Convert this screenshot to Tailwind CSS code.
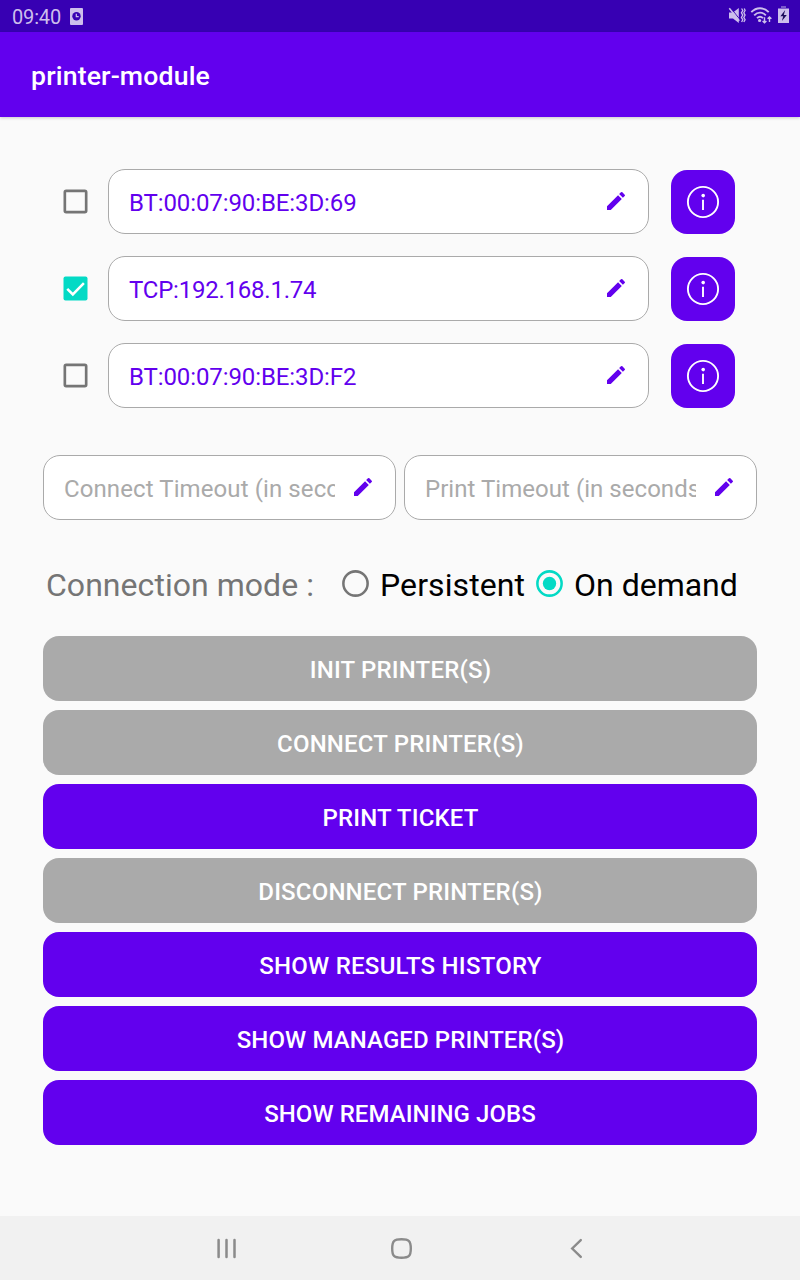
<!DOCTYPE html>
<html lang="en">
<head>
<meta charset="utf-8">
<title>printer-module</title>
<script src="https://cdn.jsdelivr.net/npm/@tailwindcss/browser@4"></script>
</head>
<body class="bg-[#fafafa] font-[Roboto,sans-serif]">
<svg class="hidden">
  <symbol id="edit" viewBox="0 0 24 24"><path fill="#6200ee" d="M3 17.25V21h3.75L17.81 9.94l-3.75-3.75L3 17.25zM20.71 7.04a1 1 0 0 0 0-1.41l-2.34-2.34a1 1 0 0 0-1.41 0l-1.83 1.83 3.75 3.75 1.83-1.83z"/></symbol>
  <symbol id="info" viewBox="0 0 34 34"><circle cx="17" cy="17" r="15.1" fill="none" stroke="#fff" stroke-width="1.9"/><circle cx="17.2" cy="10.6" r="1.8" fill="#fff"/><path d="M17 14.800v10.200" stroke="#fff" stroke-width="1.9"/></symbol>
  <symbol id="box" viewBox="-0.375 -0.375 24 24"><path fill="#757575" d="M19 5v14H5V5h14m0-2H5a2 2 0 0 0-2 2v14a2 2 0 0 0 2 2h14a2 2 0 0 0 2-2V5a2 2 0 0 0-2-2z"/></symbol>
</svg>
<div class="flex h-[1280px] w-[800px] flex-col overflow-hidden">
  <header class="flex h-8 shrink-0 items-center bg-[#3700b3] pl-3 text-[20px] text-[#cdbfec]">
    <span class="mt-[2px] leading-6 tracking-[-0.15px]">09:40</span>
    <svg class="ml-[9px] h-[17px] w-[13px]" viewBox="0 0 13 17"><rect width="13" height="17" rx="1" fill="#cdbfec"/><circle cx="6.5" cy="8.3" r="4.2" fill="#3700b3"/><path d="M6.3 5.8v2.8h2.4" fill="none" stroke="#cdbfec" stroke-width="1.2"/></svg>
    <div class="ml-auto flex h-full items-center pr-[10px]">
      <svg class="h-8 w-[62px]" viewBox="728 0 62 32" fill="none" stroke="#cdbfec">
        <path d="M729 12.500h4l5.800-4.500v15l-5.800-4.500h-4z" fill="#cdbfec" stroke="none"/>
        <path d="M730.300 7.500l10 12.500" stroke="#3700b3" stroke-width="1"/>
        <path d="M729.300 8.300l10 12.500" stroke-width="1.500"/>
        <path d="M741.600 8.500l1.200 2-1.400 2.300 1.400 2.300-1.400 2.300 1.400 2.300-1.200 2.300M744.300 8.500l.8 2-1.300 2.300 1.300 2.300-1.300 2.300 1.300 2.300-1.300 2.300" stroke-width="1.300"/>
        <path d="M751.300 12.200c5-5.300 12.400-5.300 17.400 0M754.200 15.300c3.400-3.600 8.200-3.600 11.600 0M757 18.200c1.900-1.900 4.100-1.900 6 0" stroke-width="1.900"/>
        <circle cx="759.600" cy="20.500" r="1.600" fill="#cdbfec" stroke="none"/>
        <path d="M764.500 17.300v5.500M762.600 20.900l1.900 1.900 1.900-1.900M769.500 22v-5M767.600 18.800l1.900-1.900 1.900 1.900" stroke-width="1.400"/>
        <path d="M778 8.500h11v14.500h-11z" fill="#cdbfec" stroke="none"/>
        <path d="M781 6h5v2.500h-5z" fill="#7b58cb" stroke="none"/>
        <path d="M785.200 10l-4.800 6.200h2.800l-1.300 4.800 4.900-6h-3z" fill="#1c0b5c" stroke="none"/>
      </svg>
    </div>
  </header>
  <div class="z-10 flex h-[85px] shrink-0 items-center bg-[#6200ee] pl-[31px] shadow-[0_1px_3px_rgba(0,0,0,0.2)]">
    <h1 class="mt-[3px] text-[26.67px] font-medium leading-8 tracking-[0.15px] text-white">printer-module</h1>
  </div>

  <main class="flex grow flex-col px-[43px] pt-[52px]">
    <section class="flex flex-col gap-[22px]">
      <div class="flex h-[65px] items-center">
        <svg class="mb-px ml-[16px] h-8 w-8"><use href="#box"/></svg>
        <div class="ml-[17px] flex h-[65px] w-[541px] items-center justify-between rounded-[17px] border border-[#aaa] bg-white pl-5 pr-5 text-[24px] text-[#6200ee]"><span class="mt-[2px] tracking-[-0.1px]">BT:00:07:90:BE:3D:69</span><svg class="mb-px h-6 w-6"><use href="#edit"/></svg></div>
        <button class="ml-[22px] mt-px flex h-16 w-16 items-center justify-center rounded-[16px] bg-[#6200ee]"><svg class="h-[34px] w-[34px]"><use href="#info"/></svg></button>
      </div>
      <div class="flex h-[65px] items-center">
        <svg class="mb-px ml-[16px] h-8 w-8" viewBox="-0.375 -0.375 24 24"><rect x="3" y="3" width="18" height="18" rx="1.5" fill="#03dac5"/><path d="M5.800 12.200l4.200 4.300 8.300-8.600" fill="none" stroke="#fff" stroke-width="1.900"/></svg>
        <div class="ml-[17px] flex h-[65px] w-[541px] items-center justify-between rounded-[17px] border border-[#aaa] bg-white pl-5 pr-5 text-[24px] text-[#6200ee]"><span class="mt-[2px] tracking-[-0.23px]">TCP:192.168.1.74</span><svg class="mb-px h-6 w-6"><use href="#edit"/></svg></div>
        <button class="ml-[22px] mt-px flex h-16 w-16 items-center justify-center rounded-[16px] bg-[#6200ee]"><svg class="h-[34px] w-[34px]"><use href="#info"/></svg></button>
      </div>
      <div class="flex h-[65px] items-center">
        <svg class="mb-px ml-[16px] h-8 w-8"><use href="#box"/></svg>
        <div class="ml-[17px] flex h-[65px] w-[541px] items-center justify-between rounded-[17px] border border-[#aaa] bg-white pl-5 pr-5 text-[24px] text-[#6200ee]"><span class="mt-[2px] tracking-[-0.1px]">BT:00:07:90:BE:3D:F2</span><svg class="mb-px h-6 w-6"><use href="#edit"/></svg></div>
        <button class="ml-[22px] mt-px flex h-16 w-16 items-center justify-center rounded-[16px] bg-[#6200ee]"><svg class="h-[34px] w-[34px]"><use href="#info"/></svg></button>
      </div>
    </section>

    <section class="mt-[47px] grid grid-cols-2 gap-2">
      <div class="flex h-[65px] items-center justify-between rounded-[17px] border border-[#aaa] bg-white px-5 text-[24px] text-[#aaa]"><span class="mt-[2px] w-[271px] overflow-hidden whitespace-nowrap tracking-[0.1px]">Connect Timeout (in seconds)</span><svg class="mb-px h-6 w-6 shrink-0"><use href="#edit"/></svg></div>
      <div class="flex h-[65px] items-center justify-between rounded-[17px] border border-[#aaa] bg-white px-5 text-[24px] text-[#aaa]"><span class="mt-[2px] w-[271px] overflow-hidden whitespace-nowrap tracking-[0.04px]">Print Timeout (in seconds)</span><svg class="mb-px h-6 w-6 shrink-0"><use href="#edit"/></svg></div>
    </section>

    <section class="mt-[42px] flex h-[43px] items-center whitespace-nowrap pl-[3px] text-[32px] leading-[43px] text-black">
      <span class="mt-[3px] w-[293px] tracking-[0.04px] text-[#757575]">Connection mode :</span>
      <svg class="mb-px h-8 w-8 shrink-0" viewBox="-0.375 -0.375 24 24"><circle cx="12" cy="12" r="9.100" fill="none" stroke="#757575" stroke-width="1.900"/></svg>
      <span class="ml-[9px] mt-[3px] w-[153px] tracking-[0.1px]">Persistent</span>
      <svg class="mb-px h-8 w-8 shrink-0" viewBox="-0.375 -0.375 24 24"><circle cx="12" cy="12" r="9.100" fill="none" stroke="#03dac5" stroke-width="1.900"/><circle cx="12" cy="12" r="5" fill="#03dac5"/></svg>
      <span class="ml-[9px] mt-[3px]">On demand</span>
    </section>

    <section class="mt-[31px] flex flex-col gap-[9px] text-[24px] font-medium tracking-[0.18px] text-white">
      <button class="h-[65px] rounded-[16px] bg-[#aaa] pl-px pt-[3px]">INIT PRINTER(S)</button>
      <button class="h-[65px] rounded-[16px] bg-[#aaa] pl-px pt-[3px]">CONNECT PRINTER(S)</button>
      <button class="h-[65px] rounded-[16px] bg-[#6200ee] pl-px pt-[3px]">PRINT TICKET</button>
      <button class="h-[65px] rounded-[16px] bg-[#aaa] pl-px pt-[3px]">DISCONNECT PRINTER(S)</button>
      <button class="h-[65px] rounded-[16px] bg-[#6200ee] pl-px pt-[3px] tracking-[0.25px]">SHOW RESULTS HISTORY</button>
      <button class="h-[65px] rounded-[16px] bg-[#6200ee] pl-px pt-[3px] tracking-[0.1px]">SHOW MANAGED PRINTER(S)</button>
      <button class="h-[65px] rounded-[16px] bg-[#6200ee] pt-[3px] tracking-[0.06px]">SHOW REMAINING JOBS</button>
    </section>
  </main>

  <nav class="flex h-16 shrink-0 items-center bg-[#f1f1f1] pl-[211px]">
    <svg class="h-8 w-8" viewBox="0 0 32 32" stroke="#8b8b8b" stroke-width="2.500" stroke-linecap="round"><path d="M7.600 8v17M15.500 8v17M23.500 8v17"/></svg>
    <svg class="ml-[142px] h-8 w-8" viewBox="0 0 32 32" fill="none" stroke="#8b8b8b" stroke-width="2.400"><path d="M16.500 7.200c7.500 0 9.300 1.800 9.300 9.300s-1.800 9.300-9.300 9.300-9.300-1.800-9.300-9.300 1.800-9.300 9.300-9.300z"/></svg>
    <svg class="ml-[142px] h-8 w-8" viewBox="0 0 32 32" fill="none" stroke="#8b8b8b" stroke-width="2.400" stroke-linecap="round"><path d="M21.800 8.100l-8.600 8.400 8.600 8.400"/></svg>
  </nav>
</div>
</body>
</html>
